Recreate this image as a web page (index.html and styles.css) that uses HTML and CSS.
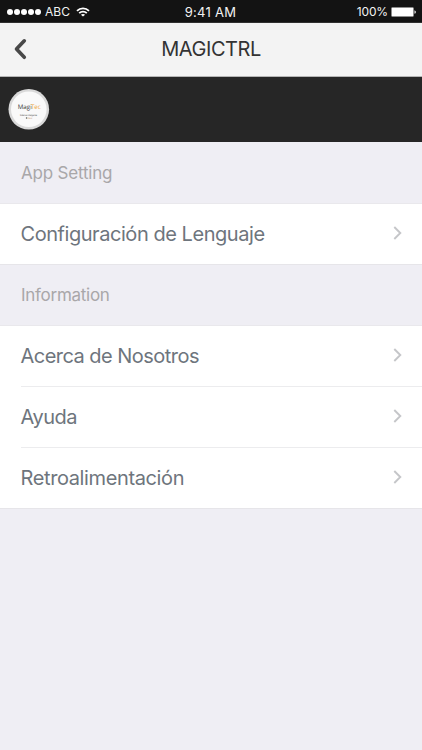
FILE: index.html
```html
<!DOCTYPE html>
<html lang="es">
<head>
<meta charset="UTF-8">
<title>MAGICTRL</title>
<link rel="stylesheet" href="styles.css">
</head>
<body>
<!-- status bar -->
<div class="status">
	<div class="carrier">
		<span class="dot"></span><span class="dot"></span><span class="dot"></span><span class="dot"></span><span class="dot"></span>
		<span class="abc">ABC</span>
		<svg class="wifi" width="14" height="10" viewBox="0 0 14 10" fill="none" stroke="#fff" stroke-width="1.8">
			<path d="M1 3.8a8.5 8.5 0 0 1 12 0M3.2 6.1a5.4 5.4 0 0 1 7.6 0"/>
			<path d="M7 9.6L4.9 7.8a3.2 3.2 0 0 1 4.2 0z" fill="#fff" stroke="none"/>
		</svg>
	</div>
	<div class="time">9:41 AM</div>
	<div class="power">
		<span class="percent">100%</span>
		<svg width="25" height="10" viewBox="0 0 25 10">
			<rect x=".5" y=".5" width="22" height="9" rx="1" fill="#fff" stroke="#8c8c8c"/>
			<path d="M23.5 3.2q1.3.4 1.3 1.8T23.5 6.8z" fill="#fff"/>
		</svg>
	</div>
</div>

<!-- title -->
<header class="nav">
	<svg class="back" width="14" height="22" viewBox="0 0 14 22" fill="none" stroke="#484848" stroke-width="3.6" stroke-linecap="round" stroke-linejoin="round">
		<path d="M11.3 2.8L3.5 11.1L11.3 19.3"/>
	</svg>
	<h1 class="title">MAGICTRL</h1>
</header>

<div class="banner">
	<svg width="42" height="42" viewBox="0 0 42 42">
		<circle cx="20.8" cy="21.3" r="20.3" fill="#d9d9d9"/>
		<circle cx="20.8" cy="21.3" r="17.8" fill="#f9f9f9"/>
		<text class="logo" x="9.8" y="21">Magi</text>
		<text class="logo tec" x="22.9" y="21">Tec</text>
		<text class="slogan" x="12" y="28" textLength="17.2" lengthAdjust="spacingAndGlyphs">Sistemas Inteligentes</text>
		<circle cx="18.6" cy="30" r=".8" fill="#555"/>
		<text class="slogan place" x="20" y="30.9" textLength="4.4" lengthAdjust="spacingAndGlyphs">México</text>
	</svg>
</div>

<!-- settings list -->
<h2 class="group g1">App Setting</h2>
<div class="list">
	<div class="row"><span class="t1">Configuración de Lenguaje</span><svg class="arrow" width="9" height="14" viewBox="0 0 9 14"><path d="M1.3 1L7.3 7L1.3 13"/></svg></div>
</div>
<h2 class="group g2">Information</h2>
<div class="list">
	<div class="row"><span class="t2">Acerca de Nosotros</span><svg class="arrow" width="9" height="14" viewBox="0 0 9 14"><path d="M1.3 1L7.3 7L1.3 13"/></svg></div>
	<div class="row"><span class="t3">Ayuda</span><svg class="arrow" width="9" height="14" viewBox="0 0 9 14"><path d="M1.3 1L7.3 7L1.3 13"/></svg></div>
	<div class="row"><span class="t4">Retroalimentación</span><svg class="arrow" width="9" height="14" viewBox="0 0 9 14"><path d="M1.3 1L7.3 7L1.3 13"/></svg></div>
</div>
</body>
</html>
```
FILE: styles.css
```css
*{
	box-sizing: border-box;
}
body{
	margin: 0;
	min-height: 750px;
	background: #efeef4;
	font-family: Inter, "Liberation Sans", sans-serif;
}

.status{
	display: grid;
	grid-template-columns: 1fr auto 1fr;
	align-items: center;
	height: 23px;
	padding: 1px 6px 0 7px;
	background: #131313;
	border-bottom: 1px solid #303030;
	color: #f2f2f2;
	font-size: 12px;
}
.carrier{
	display: flex;
	align-items: center;
	gap: 1px;
}
.dot{
	width: 6px;
	height: 6px;
	border-radius: 50%;
	background: #fff;
}
.abc{
	margin-left: 3px;
}
.wifi{
	margin-left: 5px;
}
.time{
	margin-right: 2px;
	font-size: 13px;
	letter-spacing: .3px;
}
.power{
	display: flex;
	justify-content: flex-end;
	align-items: center;
	gap: 3px;
}
.percent{
	letter-spacing: -.15px;
}

.nav{
	display: grid;
	grid-template-columns: 60px 1fr 60px;
	align-items: center;
	height: 54px;
	padding-bottom: 2px;
	background: #f3f3f3;
	border-bottom: 1px solid #b5b5b5;
}
.back{
	margin-left: 13px;
}
.title{
	margin: 0;
	color: #333;
	font-size: 20px;
	font-weight: 400;
	letter-spacing: -.45px;
	text-align: center;
}

.banner{
	height: 65px;
	padding: 11px 8px;
	background: #262626;
}
.logo{
	font: 6.2px "Open Sans", sans-serif;
	text-rendering: geometricPrecision;
	fill: #333;
}
.tec{
	fill: #f0a63c;
}
.slogan{
	font: 2.4px "Open Sans", sans-serif;
	text-rendering: geometricPrecision;
	fill: #333;
}
.place{
	fill: #b98a50;
}

.group{
	display: flex;
	align-items: center;
	height: 61px;
	margin: 0;
	padding-left: 21px;
	color: #a9a7a9;
	font-size: 17px;
	font-weight: 400;
	letter-spacing: -.2px;
}
.g2{
	height: 60px;
	letter-spacing: -.27px;
}
.list{
	background: #fff;
	border-top: 1px solid #e9e8ec;
	border-bottom: 1px solid #e6e5e9;
}
.row{
	display: flex;
	justify-content: space-between;
	align-items: center;
	height: 60px;
	margin-left: 20.5px;
	padding: 0 20px 1px 0;
	color: #6e757d;
	font-size: 20px;
}
.row + .row{
	height: 61px;
	border-top: 1px solid #ececee;
}
.t1{
	letter-spacing: -.45px;
}
.t2{
	letter-spacing: -.53px;
}
.t3{
	letter-spacing: -.5px;
}
.t4{
	letter-spacing: -.38px;
}
.arrow{
	margin-bottom: 1px;
	fill: none;
	stroke: #c5c6c9;
	stroke-width: 1.9;
}
```
